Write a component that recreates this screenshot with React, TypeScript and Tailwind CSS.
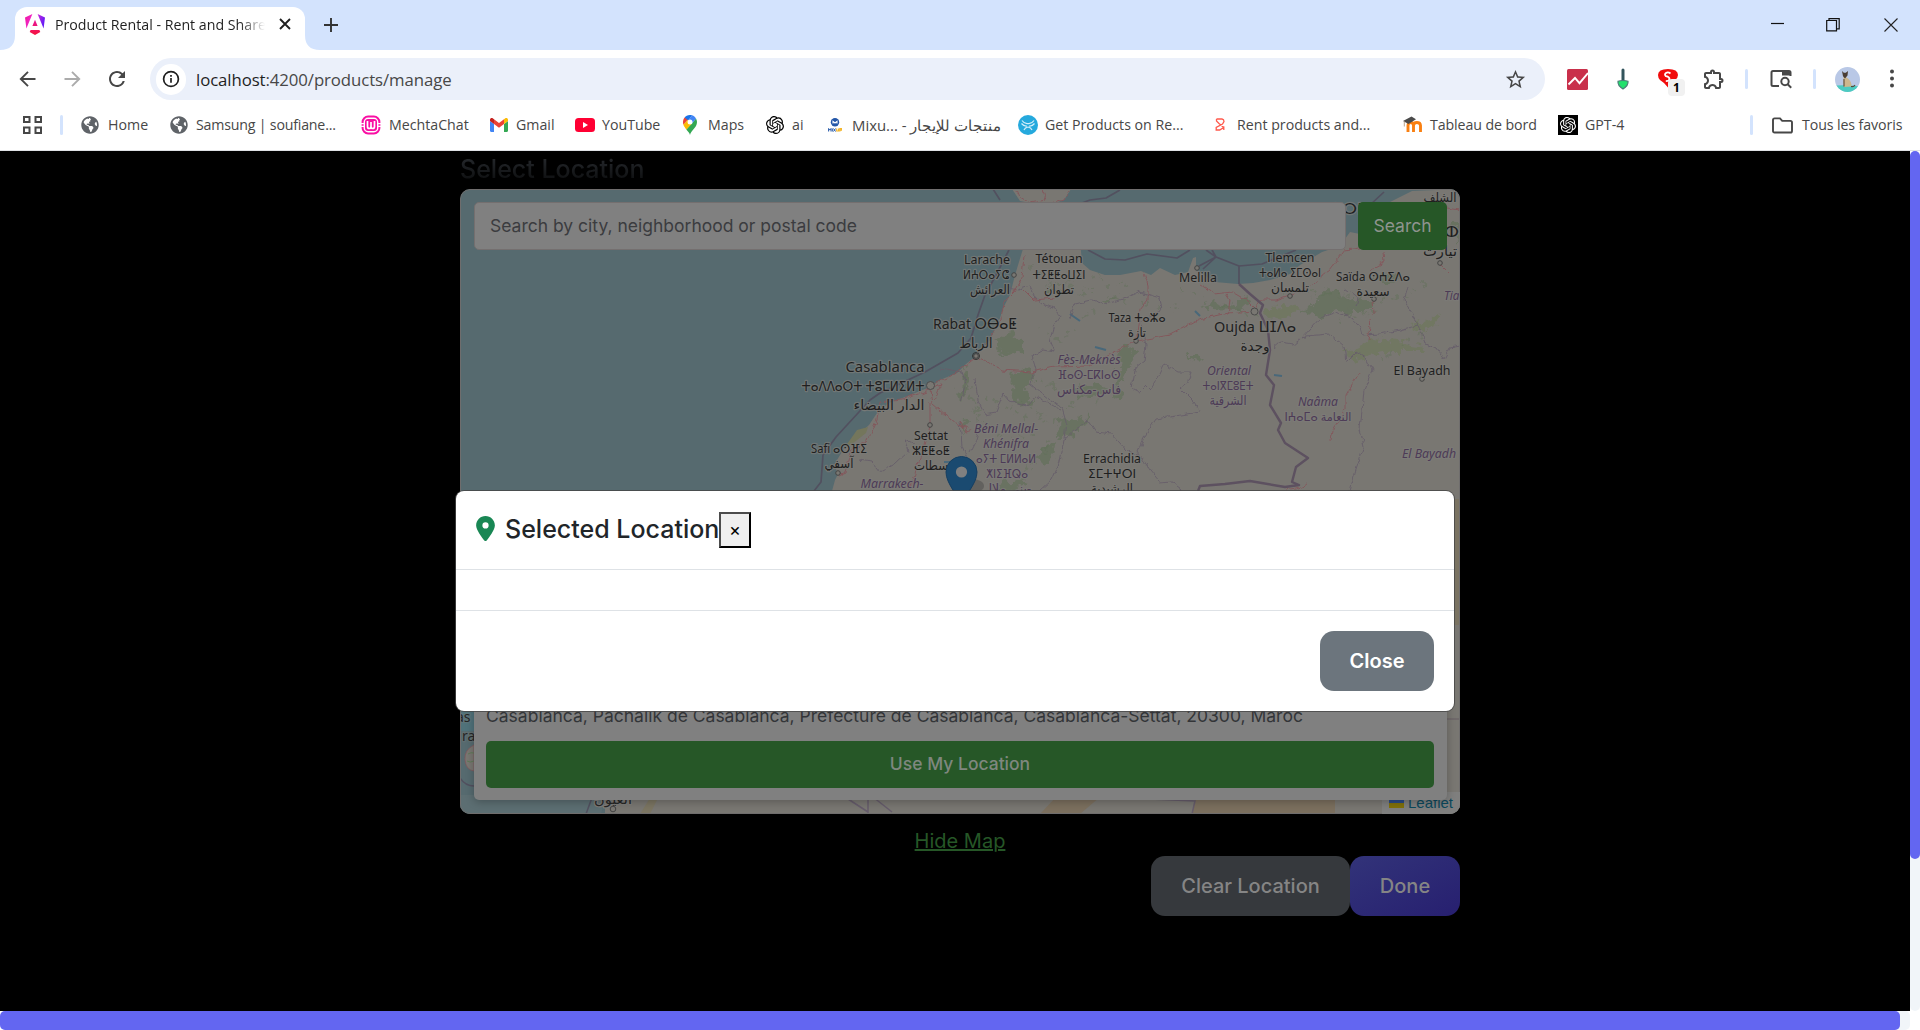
import React from "react";
import { FaGlobeAmericas } from "react-icons/fa";
import { FaLocationDot } from "react-icons/fa6";
import { MdOutlineExtension, MdStarBorder, MdRefresh } from "react-icons/md";
import { SiOpenai } from "react-icons/si";

/* ---------- browser chrome icons ---------- */

const AngularIcon = () => (
  <svg width="20" height="21" viewBox="0 0 20 21">
    <defs>
      <linearGradient id="ng" x1="0" y1="0" x2="1" y2="0.3">
        <stop offset="0" stopColor="#f0159b" />
        <stop offset="0.45" stopColor="#f02bd0" />
        <stop offset="1" stopColor="#6a1cf5" />
      </linearGradient>
      <linearGradient id="ng2" x1="0" y1="0" x2="0" y2="1">
        <stop offset="0" stopColor="#e8159b" />
        <stop offset="1" stopColor="#f5123c" />
      </linearGradient>
    </defs>
    <path d="M0 3.4 7.4 0 1.4 14.6zM20 3.4 12.6 0l6 14.6z" fill="url(#ng)" />
    <path d="M10 5.8 12.6 12H7.4zM5.6 16h8.8l.9 2L10 21l-5.3-3z" fill="url(#ng2)" />
  </svg>
);

const ArrowIcon = ({ flip = false, color }: { flip?: boolean; color: string }) => (
  <svg width="24" height="24" viewBox="0 0 24 24" fill="none" stroke={color} strokeWidth="1.9" className={flip ? "rotate-180" : ""}>
    <path d="M19.5 12H5.5M12 4.8 4.8 12l7.2 7.2" />
  </svg>
);

const InfoIcon = () => (
  <svg width="18" height="18" viewBox="0 0 18 18" fill="none" stroke="#1f1f1f" strokeWidth="1.7">
    <circle cx="9" cy="9" r="7.4" />
    <path d="M9 8v4.8M9 5v1.7" />
  </svg>
);

const GridIcon = () => (
  <svg width="20" height="18" viewBox="0 0 20 18" fill="none" stroke="#474747" strokeWidth="2">
    <path d="M2 1h5.5v5H2zM13.5 1H19v5h-5.500zM2 11.500h5.500V17H2zM13.500 11.500H19V17h-5.500z" />
  </svg>
);

const MechtaIcon = () => (
  <svg width="20" height="20" viewBox="0 0 20 20">
    <rect x="1.600" y="1.600" width="16.800" height="16.800" rx="5.500" fill="#fff" stroke="#f90fa4" strokeWidth="2" />
    <rect x="4" y="4" width="12" height="12" rx="3" fill="#f90fa4" />
    <path d="M0 8.600h3M0 11.400h3M17 8.600h3M17 11.400h3" stroke="#fff" strokeWidth="1.200" />
    <path d="M6.500 6v5.500q0 2 1.750 2t1.750-2V7v4.500q0 2 1.750 2t1.750-2V6" fill="none" stroke="#fff" strokeWidth="1.700" />
  </svg>
);

const GmailIcon = () => (
  <svg width="18" height="14" viewBox="0 0 18 14">
    <path d="M0 3v9.800c0 .7.500 1.200 1.200 1.200H4V6z" fill="#4285f4" />
    <path d="M18 3v9.800c0 .7-.500 1.200-1.200 1.200H14V6z" fill="#34a853" />
    <path d="M14 1.200V6l4-3V1.800C18 .2 16.200-.5 15 .5z" fill="#fbbc04" />
    <path d="M4 1.200V6L0 3V1.800C0 .2 1.800-.5 3 .5z" fill="#c5221f" />
    <path d="M4 1.200 9 5l5-3.800V6L9 9.800 4 6z" fill="#ea4335" />
  </svg>
);

const YouTubeIcon = () => (
  <svg width="20" height="14" viewBox="0 0 20 14">
    <rect width="20" height="14" rx="3.500" fill="#ff0033" />
    <path d="M8 4v6l5-3z" fill="#fff" />
  </svg>
);

const MapsIcon = () => (
  <svg width="14" height="20" viewBox="0 0 14 20">
    <path d="M7 20c.6-4.500 7-7 7-13 0-1.300-.400-2.600-1-3.600L3.300 14.500C5 16.500 6.600 18 7 20z" fill="#34a853" />
    <path d="M1.800 12.200c.5.800 1 1.600 1.600 2.200L9 8.500 4.600 5 .3 9.500c.3 1 .8 1.900 1.500 2.700z" fill="#fbbc04" />
    <path d="M1.600 2.600C.6 3.800 0 5.300 0 7c0 .9.100 1.700.4 2.500l5-5.500z" fill="#ea4335" />
    <path d="M9.100.3C5.500-.6 3 .8 1.600 2.600l3.700 3z" fill="#1a73e8" />
    <path d="M9.100.3 4.900 5.400 9 8.500l4-5C12.200 2 10.800.8 9.100.3z" fill="#4285f4" />
    <circle cx="7" cy="7" r="2.500" fill="#fff" />
  </svg>
);

const MixupIcon = () => (
  <svg width="14" height="14" viewBox="0 0 14 14">
    <circle cx="7" cy="4.200" r="4.200" fill="#2457a8" />
    <path d="M5 5.500V3.400l2 1.600 2-1.600v2.100" fill="none" stroke="#fff" strokeWidth="1.100" />
    <path d="M.6 13.500v-3l1.200 1.600L3 10.500v3M4.300 10.500v3M5.500 10.500l2 3M7.500 10.500l-2 3" fill="none" stroke="#2457a8" strokeWidth="1" />
    <path d="M8.700 10.500v2.500h1.900v-2.500M11.900 13.500v-2.800h1.500v1.500h-1.500" fill="none" stroke="#f3b62c" strokeWidth="1.200" />
  </svg>
);

const GetIcon = () => (
  <svg width="20" height="20" viewBox="0 0 20 20">
    <circle cx="10" cy="10" r="10" fill="#25a9dd" />
    <path d="M4 5.500Q6 8.500 9 8.700h2Q14 8.500 16 5.500M3.500 8.500Q6 11.500 9 11M16.500 8.500Q14 11.500 11 11M6 15Q7 12.500 10 12q3 .5 4 3" fill="none" stroke="#d3eefa" strokeWidth="1.200" />
  </svg>
);

const RentIcon = () => (
  <svg width="10" height="13" viewBox="0 0 10 13" fill="none" stroke="#ff5a4d" strokeWidth="1.300">
    <path d="M1.500 1h5.500q2 .3 2 2.500L7.500 6 1.200 9.500V12h3.500L8.800 9.500V12M1.500 1v2L4 5.500l4.800 4" />
  </svg>
);

const MoodleIcon = () => (
  <svg width="20" height="17" viewBox="0 0 20 17">
    <path d="M5 16V9.500q0-3 2.700-3t2.800 3V16v-6.500q0-3 3.400-3t3.600 3V16" fill="none" stroke="#f98012" strokeWidth="2.900" />
    <path d="M0 5 8.500.5 13 3.200 5.500 8z" fill="#4a4a4a" />
    <path d="M1.300 5.500v5" stroke="#b9a38b" strokeWidth="1" />
  </svg>
);

const GptIcon = () => (
  <div className="flex h-5 w-5 items-center justify-center bg-black text-white">
    <SiOpenai size={16} />
  </div>
);

const FolderIcon = () => (
  <svg width="21" height="17" viewBox="0 0 21 17" fill="none" stroke="#474747" strokeWidth="1.900">
    <path d="M1 3q0-1.600 1.600-1.600H8l2.200 2.500h8.200q1.600 0 1.600 1.600v8.400q0 1.600-1.600 1.600H2.600Q1 15.500 1 13.900z" />
  </svg>
);

const ChartIcon = () => (
  <svg width="21" height="21" viewBox="0 0 21 21">
    <rect width="21" height="21" rx="1.500" fill="#c9304b" />
    <path d="M1.500 15.500 8 9l4.500 5.200L21 4" fill="none" stroke="#fff" strokeWidth="1.900" />
  </svg>
);

const ShovelIcon = () => (
  <svg width="16" height="22" viewBox="0 0 16 22">
    <path d="M8 2V13" stroke="#32545c" strokeWidth="3" strokeLinecap="round" />
    <path d="M3 13.200Q5 12.500 8 12.500t5 .7q.6 4.500-5 7.800-5.600-3.300-5-7.800z" fill="#23e06d" stroke="#4b7d78" strokeWidth="1.200" />
  </svg>
);

const SeoIcon = () => (
  <div className="relative h-[22px] w-5">
    <svg width="20" height="20" viewBox="0 0 20 20">
      <path d="M0 7Q0 1 10 1t10 6q0 3-3 5l-7 7.500Q7 15 2 12 0 10 0 7z" fill="#f10c0c" />
      <path d="M12.500 5.500Q10 3.500 8 5t0 3.200q3.500.8 3.500 2.800T7.800 13.200" fill="none" stroke="#fff" strokeWidth="1.800" />
    </svg>
    <span className="absolute left-[10px] top-[11px] flex h-[17px] w-[17px] items-center justify-center rounded bg-[#f1f1f1] text-[12px] font-bold text-black">1</span>
  </div>
);

const SideSearchIcon = () => (
  <svg width="22" height="20" viewBox="0 0 22 20" fill="none" stroke="#474747" strokeWidth="2">
    <path d="M9 17H3q-1.500 0-1.500-1.500V3.500Q1.500 2 3 2h16q1.500 0 1.500 1.500V7" />
    <path d="M12 2h8.500v4.500H12z" fill="#474747" stroke="none" />
    <circle cx="15" cy="12.500" r="3.700" />
    <path d="m17.700 15.200 3.500 3.500" />
  </svg>
);

const Avatar = () => (
  <svg width="25" height="25" viewBox="0 0 25 25">
    <defs>
      <clipPath id="av"><circle cx="12.500" cy="12.500" r="12.500" /></clipPath>
    </defs>
    <g clipPath="url(#av)">
      <path d="M0 0h25v25H0z" fill="#b9c8e6" />
      <path d="M0 18.500q12-1 25 1V25H0z" fill="#4ccbc1" />
      <path d="M8.500 9.500q3 0 5 2.500 3 2.500 3.200 7.500l-7.700.5Q8 15 8.500 9.500z" fill="#cdb78d" />
      <path d="M7 4 8.800 5.800h2L13 4l-.5 4.500-2.500 3L8 9.200z" fill="#4a3d34" />
      <path d="M9 12v7.500M16 19.500q3 .5 4-1.500" stroke="#5a4a3c" strokeWidth="1.100" fill="none" />
    </g>
  </svg>
);

const Sep = ({ cls }: { cls: string }) => <span className={`h-5 w-[3px] shrink-0 rounded-full bg-[#d3e3fd] ${cls}`} />;

/* ---------- bookmarks ---------- */

type Bookmark = { icon: React.ReactNode; text: string; box: string; iconBox: string; label: string };

const globe = <FaGlobeAmericas size={18} color="#5f6368" />;

const bookmarks: Bookmark[] = [
  { icon: globe, text: "Home", box: "w-[89px]", iconBox: "w-[27px]", label: "" },
  { icon: globe, text: "Samsung | soufiane...", box: "w-[191px]", iconBox: "w-[26px]", label: "tracking-[-0.2px]" },
  { icon: <MechtaIcon />, text: "MechtaChat", box: "w-[129px]", iconBox: "w-[28px]", label: "" },
  { icon: <GmailIcon />, text: "Gmail", box: "w-[85px]", iconBox: "w-[26px]", label: "" },
  { icon: <YouTubeIcon />, text: "YouTube", box: "w-[108px]", iconBox: "w-[27px]", label: "" },
  { icon: <MapsIcon />, text: "Maps", box: "w-[83px]", iconBox: "w-[25px]", label: "" },
  { icon: <SiOpenai size={18} color="#000" />, text: "ai", box: "w-[62px]", iconBox: "w-[26px]", label: "" },
  { icon: <MixupIcon />, text: "Mixu... - منتجات للإيجار", box: "w-[190px]", iconBox: "w-[24px]", label: "text-[14.900px]" },
  { icon: <GetIcon />, text: "Get Products on Re...", box: "w-[197px]", iconBox: "w-[27px]", label: "" },
  { icon: <RentIcon />, text: "Rent products and...", box: "w-[188px]", iconBox: "w-[22px]", label: "" },
  { icon: <MoodleIcon />, text: "Tableau de bord", box: "w-[155px]", iconBox: "w-[27px]", label: "tracking-[-0.1px]" },
  { icon: <GptIcon />, text: "GPT-4", box: "w-[193px]", iconBox: "w-[27px]", label: "" },
];

const Chrome = () => (
  <header className="h-[151px] shrink-0 border-b border-[#dfe1e5] bg-white font-['Open_Sans','Noto_Sans',sans-serif] text-[#474747]">
    <div className="flex h-[50px] items-start bg-[#d3e3fd]">
      <div className="relative ml-[15px] mt-[7px] flex h-[43px] w-[290px] items-center rounded-t-[12px] bg-white pb-[9px] pl-[10px]">
        <svg className="absolute -left-[15px] bottom-0" width="15" height="15" viewBox="0 0 15 15"><path d="M15 0v15H0Q15 15 15 0z" fill="#fff" /></svg>
        <svg className="absolute -right-[15px] bottom-0" width="15" height="15" viewBox="0 0 15 15"><path d="M0 0v15h15Q0 15 0 0z" fill="#fff" /></svg>
        <AngularIcon />
        <span className="ml-[10px] mt-px w-[210px] overflow-hidden whitespace-nowrap bg-linear-to-r from-[#1f1f1f] from-88% to-transparent bg-clip-text text-[14.2px] text-transparent">
          Product Rental - Rent and Share
        </span>
        <svg className="ml-[14px]" width="12" height="12" viewBox="0 0 12 12" stroke="#1f1f1f" strokeWidth="1.900"><path d="m1 1 10 10M11 1 1 11" /></svg>
      </div>
      <svg className="ml-[19px] mt-[18px]" width="14" height="14" viewBox="0 0 14 14" stroke="#333" strokeWidth="1.900"><path d="M7 0v14M0 7h14" /></svg>
      <div className="ml-auto mr-[22px] mt-[18px] flex items-start">
        <svg width="13" height="14" viewBox="0 0 13 14" stroke="#111" strokeWidth="1.200"><path d="M0 5.500h13" /></svg>
        <svg className="ml-[42px]" width="14" height="14" viewBox="0 0 14 14" fill="none" stroke="#111" strokeWidth="1.200">
          <path d="M.7 2.500h9.800v10.300H.7zM3 2.500V.6h10.200v10.200h-2.700" />
        </svg>
        <svg className="ml-[44px]" width="14" height="14" viewBox="0 0 14 14" stroke="#222" strokeWidth="1.100"><path d="m.5.5 13 13M13.500.5l-13 13" /></svg>
      </div>
    </div>

    <div className="flex h-[58px] items-center">
      <span className="ml-4"><ArrowIcon color="#474747" /></span>
      <span className="ml-5"><ArrowIcon color="#ababab" flip /></span>
      <span className="ml-[21px]"><MdRefresh size={24} color="#474747" /></span>
      <div className="ml-[21px] flex h-[42px] w-[1395px] items-center rounded-full bg-[#ebf0fa] pl-[6px] pr-[18px]">
        <span className="flex h-[31px] w-[30px] items-center justify-center rounded-full bg-white"><InfoIcon /></span>
        <span className="ml-[10px] mt-[2px] text-[16.8px] tracking-[-0.09px] text-[#474747]"><span className="text-[#1f1f1f]">localhost</span>:4200/products/manage</span>
        <MdStarBorder className="ml-auto" size={23} color="#474747" />
      </div>
      <span className="ml-[22px]"><ChartIcon /></span>
      <span className="ml-[27px]"><ShovelIcon /></span>
      <span className="ml-[27px]"><SeoIcon /></span>
      <span className="ml-[24px]"><MdOutlineExtension size={24} color="#474747" /></span>
      <Sep cls="ml-[19px]" />
      <span className="ml-[22px]"><SideSearchIcon /></span>
      <Sep cls="ml-[21px]" />
      <span className="ml-[19px]"><Avatar /></span>
      <svg className="ml-[30px]" width="4" height="20" viewBox="0 0 4 20" fill="#474747"><circle cx="2" cy="2.500" r="2" /><circle cx="2" cy="9.500" r="2" /><circle cx="2" cy="16.500" r="2" /></svg>
    </div>

    <div className="flex h-[34px] items-center text-[14.2px]">
      <span className="ml-[22px]"><GridIcon /></span>
      <Sep cls="ml-[18px] mr-[18px]" />
      {bookmarks.map((b) => (
        <div key={b.text} className={`flex shrink-0 items-center ${b.box}`}>
          <span className={`shrink-0 ${b.iconBox}`}>{b.icon}</span>
          <span className={`whitespace-nowrap ${b.label}`}>{b.text}</span>
        </div>
      ))}
      <Sep cls="-ml-px" />
      <span className="ml-[19px]"><FolderIcon /></span>
      <span className="ml-[9px] whitespace-nowrap tracking-[-0.1px]">Tous les favoris</span>
    </div>
  </header>
);

/* ---------- map ---------- */

type Label = { x: number; y: number; t: string; w: number; s?: number; region?: boolean };

const labels: Label[] = [
  { x: 987, y: 264, t: "Larache", w: 46 }, { x: 986, y: 279, t: "ⵍⵄⵔⴰⵢⵛ", w: 46, s: 12 }, { x: 990, y: 294, t: "العرائش", w: 40 },
  { x: 1059, y: 263, t: "Tétouan", w: 47 }, { x: 1059, y: 279, t: "ⵜⵉⵟⵟⴰⵡⵉⵏ", w: 53, s: 12 }, { x: 1059, y: 294, t: "تطوان", w: 30 },
  { x: 975, y: 329, t: "Rabat ⵔⴱⴰⵟ", w: 84, s: 15 }, { x: 976, y: 348, t: "الرباط", w: 33, s: 14 },
  { x: 885, y: 372, t: "Casablanca", w: 79, s: 15 }, { x: 863, y: 391, t: "ⵜⴰⴷⴷⴰⵔⵜ ⵜⵓⵎⵍⵉⵍⵜ", w: 123, s: 14 }, { x: 889, y: 410, t: "الدار البيضاء", w: 71, s: 14 },
  { x: 839, y: 453, t: "Safi ⴰⵙⴼⵉ", w: 56 }, { x: 839, y: 468, t: "آسفي", w: 29 },
  { x: 931, y: 440, t: "Settat", w: 34 }, { x: 931, y: 455, t: "ⵣⵟⵟⴰⵟ", w: 38, s: 12 }, { x: 931, y: 470, t: "سطات", w: 34 },
  { x: 1137, y: 322, t: "Taza ⵜⴰⵣⴰ", w: 57 }, { x: 1137, y: 337, t: "تازة", w: 18 },
  { x: 1198, y: 282, t: "Melilla", w: 38 },
  { x: 1290, y: 262, t: "Tlemcen", w: 49 }, { x: 1290, y: 277, t: "ⵜⴰⵍⴰ ⵉⵎⵙⴰⵏ", w: 62, s: 12 }, { x: 1290, y: 292, t: "تلمسان", w: 38 },
  { x: 1373, y: 281, t: "Saïda ⵙⵄⵉⴷⴰ", w: 74 }, { x: 1373, y: 296, t: "سعيدة", w: 33 },
  { x: 1255, y: 332, t: "Oujda ⵡⵊⴷⴰ", w: 82, s: 15 }, { x: 1255, y: 351, t: "وجدة", w: 29, s: 14 },
  { x: 1422, y: 375, t: "El Bayadh", w: 57 },
  { x: 1112, y: 463, t: "Errachidia", w: 58 }, { x: 1112, y: 478, t: "ⵉⵎⵜⵖⵔⵏ", w: 48, s: 12 }, { x: 1112, y: 493, t: "الرشيدية", w: 42 },
  { x: 1345, y: 214, t: "ⵔⵔⵏ", w: 34, s: 15 }, { x: 1440, y: 202, t: "الشلف", w: 33 }, { x: 1446, y: 237, t: "ⴰⵀ", w: 26, s: 15 }, { x: 1440, y: 256, t: "تيارت", w: 34, s: 14 },
  { x: 1089, y: 364, t: "Fès-Meknès", w: 63, region: true }, { x: 1089, y: 379, t: "ⴼⴰⵙ-ⵎⴽⵏⴰⵙ", w: 63, s: 12, region: true }, { x: 1089, y: 394, t: "فاس-مكناس", w: 64, region: true },
  { x: 1229, y: 375, t: "Oriental", w: 44, region: true }, { x: 1228, y: 390, t: "ⵜⴰⵏⴳⵎⵓⴹⵜ", w: 51, s: 12, region: true }, { x: 1228, y: 405, t: "الشرقية", w: 37, region: true },
  { x: 1318, y: 406, t: "Naâma", w: 40, region: true }, { x: 1318, y: 421, t: "ⵏⵄⴰⵎⴰ النعامة", w: 67, s: 12, region: true },
  { x: 1006, y: 433, t: "Béni Mellal-", w: 64, region: true }, { x: 1006, y: 448, t: "Khénifra", w: 46, region: true }, { x: 1006, y: 463, t: "ⴰⵢⵜ ⵎⵍⵍⴰⵍ", w: 60, s: 12, region: true },
  { x: 1007, y: 478, t: "ⵅⵏⵉⴼⵕⴰ", w: 42, s: 12, region: true }, { x: 1007, y: 493, t: "بني ملال-", w: 48, region: true },
  { x: 892, y: 488, t: "Marrakech-", w: 63, region: true },
  { x: 1429, y: 458, t: "El Bayadh", w: 54, region: true }, { x: 1454, y: 300, t: "Tiar", w: 20, region: true },
];

const dots = [[1014, 275], [976, 356], [930, 425], [838, 473], [1136, 341], [1197, 268], [1290, 296], [1374, 299], [1440, 263], [1422, 379]];

const forest = [
  "1000,336 1012,333 1024,342 1020,352 1010,356 996,350 993,340", "1012,372 1030,368 1035,380 1024,390 1034,402 1018,406 1010,390",
  "1122,345 1136,350 1132,365 1124,375 1120,395 1113,400 1118,370", "1230,304 1245,297 1252,302 1240,311 1212,310 1205,306",
  "1318,300 1325,290 1340,292 1350,300 1360,305 1354,315 1336,310 1322,318 1312,312 1300,314", "1346,302 1362,298 1374,306 1366,312 1350,312",
  "1060,418 1078,420 1090,412 1082,428 1068,436 1056,440", "1040,448 1056,446 1052,460 1044,466 1036,458", "1000,486 1018,478 1028,482 1015,491 1000,491",
  "965,366 972,372 968,388 962,402 958,398", "1185,356 1202,356 1196,362", "1100,303 1115,298 1112,304", "1370,280 1390,285 1400,275 1384,272", "1046,285 1056,292 1048,294",
  "962,418 966,424 960,440", "1450,226 1460,222 1460,245", "1072,388 1098,384 1110,392 1080,396", "1200,306 1215,302 1225,306 1212,310",
];

const lightForest = ["1268,308 1290,305 1302,310 1290,316 1272,320 1265,314", "1418,322 1440,316 1436,326 1424,332 1410,326", "1345,352 1380,338 1420,345 1424,352 1390,352 1352,360"];

const borders = [
  "1010,288 1018,290 1030,286 1036,298 1044,305 1054,308 1060,316 1054,325 1050,340 1055,352 1042,350 1032,356 1036,370 1030,384 1040,392 1050,400 1062,408 1066,422 1064,440 1060,462 1052,480 1040,491",
  "1070,318 1074,304 1092,300 1104,304 1120,300 1140,292 1160,298 1162,310 1150,316 1140,322 1146,345 1144,360 1136,366 1132,388 1140,392 1146,386 1150,390 1158,376 1164,364 1178,372 1192,372 1190,380 1180,388 1192,400 1200,412 1156,419 1145,436 1138,452 1150,470 1160,482 1170,481 1184,491",
  "1064,440 1075,430 1088,420 1096,432 1112,434 1126,450 1138,455", "1273,348 1280,342 1294,344 1305,336 1330,334 1344,346 1346,362 1356,352 1366,358 1372,370 1364,390 1360,430 1364,446 1356,470 1350,491",
  "1302,338 1320,318 1336,312 1352,318 1360,328 1362,335 1380,334 1400,330 1418,325 1425,343 1436,348 1444,360 1450,348 1460,346",
  "975,380 978,400 985,414 996,412 1003,394 1010,402 1026,406 1035,396 1046,402 1060,410", "960,420 962,446 968,460", "860,460 872,462 880,472 895,464 908,452 905,440 914,444",
  "1408,286 1404,300 1412,312 1418,325", "1345,288 1358,298 1356,306", "940,368 962,372 966,384 960,402", "980,426 976,440 970,452",
];

const roads = [
  "930,386 950,376 966,366 976,358 985,360 1002,370 1032,372 1048,368 1056,367 1090,366 1118,350 1136,341 1170,335 1200,319 1228,313 1254,311",
  "976,356 990,338 1002,318 1006,300 1014,292 1022,278 1024,255", "930,390 932,404 946,416 956,424 968,428", "930,404 930,426 924,450 916,470 910,491",
  "930,390 908,398 880,402 877,420 868,440 852,450 845,472 838,475", "930,388 942,384 934,400", "1254,311 1260,300 1276,300 1305,290 1330,270 1345,250 1360,248 1385,240",
  "1144,272 1148,285 1148,300 1140,310 1136,340", "1254,308 1246,300 1232,292 1215,294 1200,285", "1368,340 1370,328 1369,318", "1359,373 1346,396 1346,410 1333,430 1331,441", "1307,484 1296,489 1285,491",
  "1440,265 1450,275", "1017,190 1020,197 1030,203 1046,200 1042,190", "1070,190 1064,200 1052,204", "1228,315 1230,300 1226,294", "960,420 966,432 974,430", "1386,226 1404,214 1440,207 1460,210",
  "1373,300 1374,315", "1370,270 1385,262 1384,252", "1024,290 1034,300 1055,298",
];

const MapCanvas = () => (
  <svg className="absolute inset-0" width="1000" height="625" viewBox="460 189 1000 625">
    <defs>
      <filter id="patchy" x="460" y="189" width="1000" height="625" filterUnits="userSpaceOnUse">
        <feTurbulence type="fractalNoise" baseFrequency="0.12" numOctaves="3" seed="4" result="n" />
        <feDisplacementMap in="SourceGraphic" in2="n" scale="16" xChannelSelector="R" yChannelSelector="G" />
        <feGaussianBlur stdDeviation="0.5" />
      </filter>
      <filter id="jagged" x="460" y="189" width="1000" height="625" filterUnits="userSpaceOnUse">
        <feTurbulence type="fractalNoise" baseFrequency="0.14" numOctaves="2" seed="9" result="n" />
        <feDisplacementMap in="SourceGraphic" in2="n" scale="6" xChannelSelector="R" yChannelSelector="G" />
      </filter>
    </defs>
    <rect x="460" y="189" width="1000" height="625" fill="#566a6f" />
    <path
      fill="#797772"
      d="M832 491 835 480 838 474 834 465 843 450 856 437 869 425 877 413 889 403 905 397 930 387 940 380 957 373 966 364 976 356 990 340 1000 318 1003 308 1010 295 1015 275 1022 252 1026 240 1080 240 1082 263 1090 270 1105 275 1120 275 1141 271 1151 275 1160 268 1175 275 1188 272 1193 258 1196 257 1196 270 1204 275 1215 282 1238 284 1253 283 1270 280 1290 274 1300 265 1322 252 1340 246 1350 232 1365 235 1374 218 1390 202 1412 191 1460 189 1460 814 620 814 600 790 610 700 700 600Z"
    />
    <path d="M1012 189 1020 201 1045 206 1064 200 1071 189Z" fill="#797772" />
    <path d="M857 430 868 427 866 433 852 444 845 447Z" fill="#74765c" />
    <g fill="#5f6f57" opacity=".6" filter="url(#patchy)">{forest.map((p) => <polygon key={p} points={p} />)}</g>
    <g fill="#6c7859" opacity=".6" filter="url(#patchy)">{lightForest.map((p) => <polygon key={p} points={p} />)}</g>
    <g fill="none" stroke="#5f6f57" strokeWidth="3" opacity=".4" strokeDasharray="3 7 5 11 2 6" filter="url(#patchy)">
      <path d="M1030 265 1050 285 1100 275M1080 292 1180 310M1020 400 1050 425 1080 400M1180 290 1270 320M1280 290 1400 300 1430 280M1040 380 1100 402M1095 310 1060 340 1040 330M970 400 1000 440 1040 430M1050 440 1020 480M1380 360 1430 330M1340 320 1380 310M965 375 980 420M985 395 1030 420M1060 290 1130 285" />
    </g>
    <g fill="none" stroke="#49687a" strokeWidth="2"><path d="M1070 314 1080 321M1095 347 1106 350M1195 311 1200 316M1274 375 1282 376M944 462 950 462" /></g>
    <g fill="none" stroke="#675d6a" strokeWidth="0.9" strokeLinejoin="round" filter="url(#jagged)">{borders.map((p) => <polyline key={p} points={p} />)}</g>
    <g fill="none" stroke="#83585c" strokeWidth="1" strokeLinejoin="round" filter="url(#jagged)">{roads.map((p) => <polyline key={p} points={p} />)}</g>
    <g fill="none" stroke="#52505f" strokeWidth="1.700" strokeLinejoin="round">
      <path d="M814 491 821 482 823 455 836 437 870 400 880 393 925 372 958 353 971 338 978 315 985 295 996 275 1009 250M993 189 1000 200M1082 203 1090 200 1106 198 1120 190M1088 250 1105 259 1125 260 1147 254 1177 258 1190 250M1206 250 1216 257 1199 266M1212 250 1216 257 1203 269M1216 257 1239 266 1262 264 1296 250M1239 266V284M1370 205 1384 192" />
    </g>
    <path d="M1239 284 1250 294 1263 305 1260 313 1268 330 1270 350 1266 375 1274 385 1270 405 1281 423 1278 430 1285 443 1308 458 1296 467 1292 482 1299 485 1285 487 1250 481 1225 484 1200 486 1198 491" fill="none" stroke="#5d5160" strokeWidth="2.400" strokeLinejoin="round" />
    <g fill="#797772" stroke="#444" strokeWidth="1">{dots.map(([x, y]) => <circle key={x} cx={x} cy={y} r="2.300" />)}</g>
    <circle cx="930.500" cy="385.500" r="4" fill="#797772" stroke="#4c4c4c" />
    <circle cx="1254.500" cy="311.500" r="3.500" fill="#797772" stroke="#4c4c4c" />
    <circle cx="976" cy="356" r="3.500" fill="none" stroke="#333" />
    <rect x="1454" y="499" width="6" height="126" fill="#7a7362" />
    <path d="M1447 719h13" stroke="#665c62" />

    <path d="M460 700h14v31h-14z" fill="#50727a" />
    <path d="M460 731h14v83h-14z" fill="#566a6f" />
    <path d="M474 745Q464 750 465 760T474 771z" fill="#797772" stroke="#84555a" strokeWidth=".7" />
    <path d="M468 754q3-2 6-1M467 761q3 2 7 0" stroke="#5f7a57" fill="none" />
    <path d="M460 778q5 8 14 8" fill="none" stroke="#52505f" strokeWidth="1.500" />
    <path d="M605 814V795H1460V814z" fill="#797772" />
    <path d="M460 795H606L601 814H460z" fill="#5c6e72" />
    <path d="M593 795 586 814" stroke="#52505f" strokeWidth="1.500" />
    <path d="M1040 814 1056 797H1100L1080 814zM1195 797H1335V814H1192z" fill="#7b6f5e" />
    <path d="M640 814 650 798H658L650 814z" fill="#7b7562" />
    <path d="M845 797 868 812M868 797V814M873 797 892 812M1150 799 1195 801 1192 814" fill="none" stroke="#665c6b" strokeWidth="1.500" />

    <g fontFamily="'Noto Sans','DejaVu Sans',sans-serif" textAnchor="middle" stroke="#7d7c79" strokeWidth="2.500" strokeLinejoin="round" style={{ paintOrder: "stroke" }}>
      {labels.map((l) => (
        <text key={`${l.t}${l.y}`} x={l.x} y={l.y} fontSize={l.s ?? 13} textLength={l.w} lengthAdjust="spacingAndGlyphs" fill={l.region ? "#4d3b56" : "#1f1f1f"} fontStyle={l.region && l.t.charCodeAt(0) < 256 ? "italic" : "normal"} strokeOpacity={0.7}>
          {l.t}
        </text>
      ))}
      <text x="456" y="722" fontSize="14" textAnchor="start" fill="#262626" strokeOpacity={0.3}>as</text>
      <text x="462" y="741" fontSize="14" textAnchor="start" fill="#262626" strokeOpacity={0.3}>ra</text>
      <text x="613" y="804" fontSize="13" textLength="38" lengthAdjust="spacingAndGlyphs" fill="#262626">العيون</text>
    </g>
    <circle cx="613" cy="809" r="2.800" fill="#797772" stroke="#444" />

    <ellipse cx="972" cy="486" rx="12" ry="7" fill="#3a3a3a" opacity=".35" />
    <path d="M961 507C958 494 946 484 946 472a15.500 15.500 0 0 1 31 0c0 12-12 22-16 35z" fill="#1a4a70" stroke="#173f61" strokeWidth="1" />
    <circle cx="961.500" cy="472" r="5.600" fill="#808080" />
  </svg>
);

/* ---------- page ---------- */

const LocationPicker = () => (
  <div className="ml-[460px] w-[1000px] font-['Inter',sans-serif]">
    <h5 className="h-[38px] whitespace-nowrap bg-linear-to-b from-[#24272b] from-20% to-[#0c0d0e] to-85% bg-clip-text pt-[2px] text-[25px] font-medium leading-[32px] text-transparent">Select Location</h5>
    <div className="relative h-[625px] overflow-hidden rounded-[10px]">
      <MapCanvas />
      <div className="absolute inset-0 rounded-[10px] border border-[#6f6d6d]" />
      <div className="absolute bottom-0 right-0 flex h-[22px] w-[78px] items-center bg-[#7f7f7e] pl-[7px] font-['Liberation_Sans',sans-serif] text-[15px] text-[#0b485c]">
        <span className="mr-1 flex h-[10px] w-[15px] flex-col"><span className="h-[5px] bg-[#2a4a86]" /><span className="h-[5px] bg-[#80700a]" /></span>
        Leaflet
      </div>
      <div className="absolute left-[14px] right-[13px] top-[13px] flex h-12 gap-3">
        <div className="flex w-[872px] items-center rounded-[5px] border border-[#746f6f] bg-[#808080] px-[15px] text-[17.5px] text-[#3b3c3f]">Search by city, neighborhood or postal code</div>
        <button className="flex-1 rounded-[5px] bg-[#265727] text-[17.5px] text-[#8f948f]">Search</button>
      </div>
      <div className="absolute bottom-[14px] left-[14px] right-[13px] rounded-[5px] bg-[#808080] pb-3 pl-3 pr-[13px] shadow-[0_2px_8px_rgba(0,0,0,0.25)]">
        <p className="h-[66px] whitespace-nowrap pt-[28px] text-[17.5px] leading-[26px] text-[#333538]">Casablanca, Pachalik de Casablanca, Préfecture de Casablanca, Casablanca-Settat, 20300, Maroc</p>
        <button className="h-[47px] w-full rounded-[5px] bg-[#265727] text-[17.5px] font-medium text-[#7f877f]">Use My Location</button>
      </div>
    </div>
    <div className="flex h-[42px] justify-center pt-[12px]">
      <a className="text-[20px] leading-[30px] text-[#265727] underline">Hide Map</a>
    </div>
    <div className="flex justify-end">
      <button className="h-[60px] w-[199px] rounded-[14px] bg-[#36393d] text-[20px] font-medium text-[#858585]">Clear Location</button>
      <button className="h-[60px] w-[110px] rounded-[14px] bg-linear-to-br from-[#323379] to-[#271f70] text-[20px] font-medium text-[#858585]">Done</button>
    </div>
  </div>
);

const Modal = () => (
  <div className="absolute left-[456px] top-[340px] h-[220px] w-[998px] rounded-[8px] bg-white font-['Inter',sans-serif] shadow-[0_0_0_1px_rgba(70,70,70,0.8)]">
    <div className="flex h-[79px] items-start border-b border-[#dee2e6] pl-5 pt-[21px]">
      <FaLocationDot className="mt-[4px] h-[25px] w-[19px] text-[#198754]" />
      <h5 className="ml-[10px] w-[214px] whitespace-nowrap text-[25px] font-medium leading-[34px] text-[#212529]">Selected Location</h5>
      <button className="h-9 w-8 border-2 border-b-black border-l-[#4c4c4c] border-r-black border-t-[#4c4c4c] bg-[#efefef] text-[18px] leading-none text-black">×</button>
    </div>
    <div className="h-[41px] border-b border-[#dee2e6]" />
    <div className="flex justify-end p-5">
      <button className="h-[60px] w-[114px] rounded-[14px] bg-[#6c757d] text-[20px] font-semibold text-white">Close</button>
    </div>
  </div>
);

export default function App() {
  return (
    <div className="flex h-[1030px] w-[1920px] flex-col overflow-hidden bg-white">
      <Chrome />
      <div className="flex h-[860px] shrink-0">
        <main className="relative w-[1910px] overflow-hidden bg-black">
          <LocationPicker />
          <Modal />
        </main>
        <div className="w-[10px] rounded-[5px] bg-[#f1f5f9]">
          <div className="h-[708px] rounded-[5px] bg-[#6366f1]" />
        </div>
      </div>
      <div className="h-[19px] w-[1910px] rounded-[5px] bg-[#f1f5f9]">
        <div className="h-full w-[1900px] rounded-[5px] bg-[#6366f1]" />
      </div>
    </div>
  );
}
